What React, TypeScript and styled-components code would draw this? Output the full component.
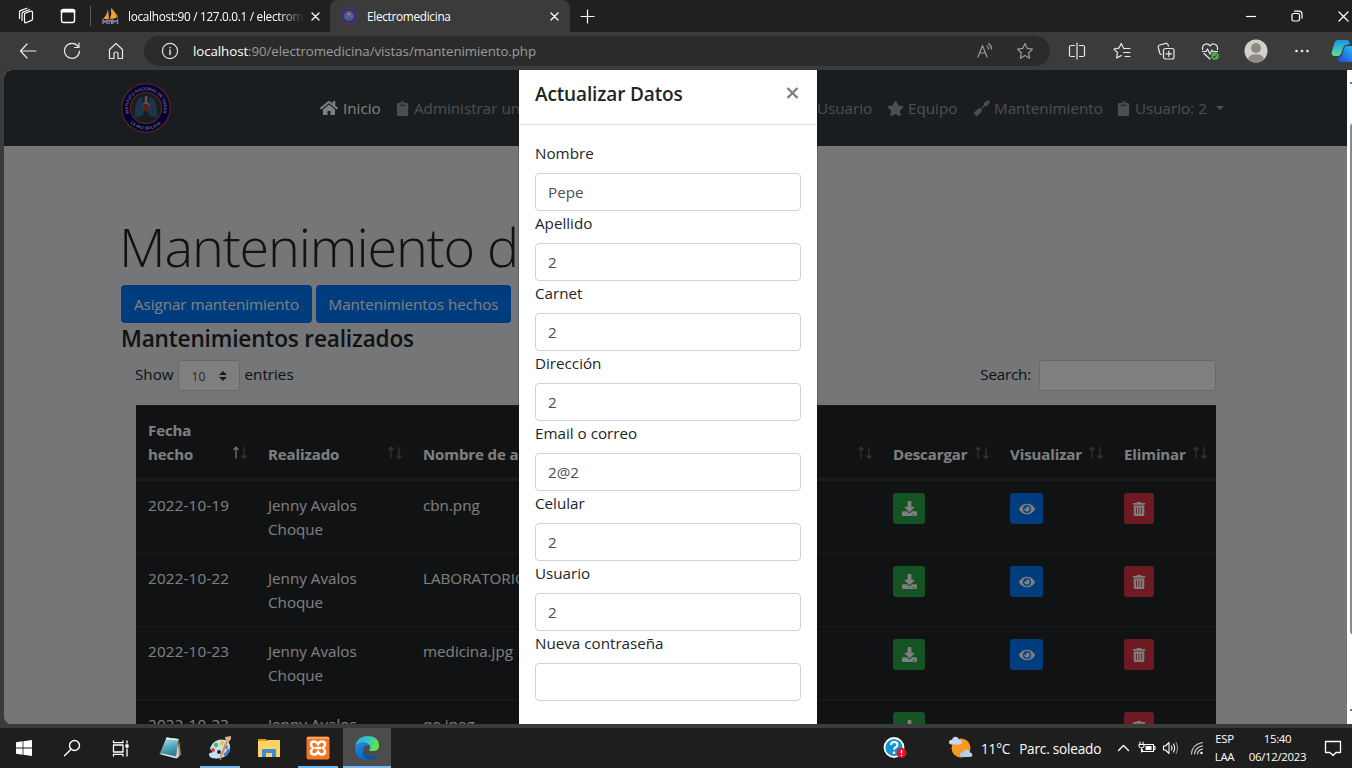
import React from 'react';
import styled, { createGlobalStyle, css } from 'styled-components';
import {
  FaHome,
  FaClipboard,
  FaStar,
  FaScrewdriver,
  FaDownload,
  FaEye,
  FaTrashAlt,
} from 'react-icons/fa';

const UI = "'Open Sans', 'Noto Sans', sans-serif";

const Global = createGlobalStyle`
  * { box-sizing: border-box; }
  body { margin: 0; background: #3b3b3b; overflow: hidden; font-family: ${UI}; }
  svg { display: block; flex: none; }
`;

const Screen = styled.div`
  width: 1352px;
  height: 768px;
  overflow: hidden;
  display: flex;
  flex-direction: column;
  background: #3b3b3b;
`;

const Slot = styled.div<{ $w: number }>`
  width: ${(p) => p.$w}px;
  height: 100%;
  flex: none;
  display: flex;
  align-items: center;
  justify-content: center;
`;

/* ---------- browser chrome ---------- */

const TabStrip = styled.div`
  height: 32px;
  flex: none;
  display: flex;
  background: #202020;
  color: #fff;
`;

const Divider = styled.div`
  width: 1px;
  height: 20px;
  margin: 0 0 0 5px;
  background: #5c5c5c;
`;

const Tab = styled.div<{ $active?: boolean }>`
  width: ${(p) => (p.$active ? 240 : 238)}px;
  height: 32px;
  flex: none;
  display: flex;
  align-items: center;
  padding-left: ${(p) => (p.$active ? 11 : 10)}px;
  border-radius: 8px 8px 0 0;
  background: ${(p) => (p.$active ? '#3b3b3b' : 'transparent')};
`;

const TabTitle = styled.div<{ $fade?: boolean }>`
  width: 176px;
  margin-left: ${(p) => (p.$fade ? 9 : 10)}px;
  flex: none;
  overflow: hidden;
  white-space: nowrap;
  font-size: 11.8px;
  line-height: 18px;
  letter-spacing: -0.3px;
  color: #fff;
  ${(p) =>
    p.$fade &&
    css`
      mask-image: linear-gradient(90deg, #000 86%, transparent 100%);
    `}
`;

const Spacer = styled.div`
  flex: 1;
`;

const Toolbar = styled.div`
  height: 38px;
  flex: none;
  display: flex;
  align-items: center;
  padding-left: 6px;
  color: #e8e8e8;
  background: #3b3b3b;
`;

const AddressBar = styled.div`
  width: 906px;
  height: 30px;
  margin: 0 5px 0 6px;
  flex: none;
  display: flex;
  align-items: center;
  border-radius: 15px;
  background: #2b2b2b;
  color: #9b9b9b;
`;

const Url = styled.div`
  margin-left: -3px;
  flex: 1;
  white-space: nowrap;
  font-size: 13.3px;
  letter-spacing: -0.07px;
  b {
    font-weight: 400;
    color: #fff;
  }
`;

/* ---------- page ---------- */

const Viewport = styled.div`
  height: 654px;
  flex: none;
  margin: 0 0 4px 4px;
  display: flex;
  position: relative;
  overflow: hidden;
  border-radius: 8px 0 0 8px;
`;

const Page = styled.div`
  width: 1343px;
  height: 654px;
  overflow: hidden;
  flex: none;
  background: #e9ecef;
  color: #212529;
  font-size: 15.2px;
  line-height: 24px;
`;

const Scrollbar = styled.div`
  width: 5px;
  padding: 12px 0 0 3px;
  background: #fff;
  overflow: hidden;
`;

const ScrollArrow = styled.div`
  width: 2px;
  height: 2px;
  background: #777;
`;

const ScrollThumb = styled.div`
  width: 8px;
  height: 512px;
  margin: 39px 0 74px;
  border-radius: 4px;
  background: #8a8a8a;
`;

const Navbar = styled.nav`
  height: 76px;
  padding: 0 116px 0 117px;
  display: flex;
  align-items: center;
  background: #343a40;
`;

const NavItem = styled.a<{ $active?: boolean; $w: number; $gap?: number }>`
  width: ${(p) => p.$w}px;
  flex: none;
  display: flex;
  align-items: center;
  gap: ${(p) => p.$gap ?? 3}px;
  white-space: nowrap;
  color: ${(p) => (p.$active ? '#fff' : 'rgba(255,255,255,.5)')};
`;

const NavGap = styled.div<{ $w: number }>`
  width: ${(p) => p.$w}px;
  flex: none;
`;

const Caret = styled.span`
  margin-left: 5px;
  border: 4px solid transparent;
  border-top-color: currentColor;
  border-bottom: 0;
`;

const Container = styled.main`
  width: 1110px;
  margin-left: 117px;
  padding-top: 66px;
`;

const Title = styled.h1`
  margin: 0 0 0 -2px;
  height: 73px;
  font-size: 54px;
  font-weight: 300;
  line-height: 68px;
  letter-spacing: -1.15px;
  white-space: nowrap;
`;

const ButtonRow = styled.div`
  display: flex;
  gap: 4px;
`;

const PrimaryButton = styled.button<{ $w: number }>`
  width: ${(p) => p.$w}px;
  height: 38px;
  padding: 0;
  border: 0;
  border-radius: 4px;
  background: #007bff;
  color: #fff;
  font: 15.2px/38px ${UI};
  letter-spacing: -0.04px;
  white-space: nowrap;
`;

const Subtitle = styled.h4`
  margin: 0;
  height: 37px;
  font-size: 22.6px;
  font-weight: 600;
  line-height: 31px;
  letter-spacing: -0.16px;
  white-space: nowrap;
`;

const Controls = styled.div`
  height: 45px;
  padding: 0 15px 0 14px;
  display: flex;
  align-items: flex-start;
  line-height: 29px;
`;

const LengthSelect = styled.div`
  width: 62px;
  height: 31px;
  margin: 0 5px 0 4px;
  padding: 1px 12px 0 13px;
  display: flex;
  align-items: center;
  justify-content: space-between;
  border: 1px solid #ced4da;
  border-radius: 3px;
  background: #fff;
  color: #495057;
  font-size: 12px;
`;

const SearchLabel = styled.span`
  letter-spacing: -0.2px;
`;

const SearchInput = styled.input`
  width: 177px;
  height: 31px;
  margin-left: 8px;
  border: 1px solid #ced4da;
  border-radius: 3px;
  background: #fff;
`;

const DataTable = styled.table`
  width: 1080px;
  margin-left: 15px;
  table-layout: fixed;
  border-collapse: separate;
  border-spacing: 0;
  background: #212529;
  color: #fff;
`;

const Th = styled.th`
  height: 75px;
  padding: 12px 9px 12px 12px;
  border-top: 1px solid #32383e;
  border-bottom: 2px solid #32383e;
  vertical-align: bottom;
  text-align: left;
  font-weight: 700;
  font-size: 15px;
  letter-spacing: -0.1px;
`;

const ThInner = styled.div`
  display: flex;
  align-items: flex-end;
  justify-content: space-between;
  white-space: nowrap;
`;

const Td = styled.td`
  height: 73px;
  padding: 12px 0 12px 12px;
  border-top: 1px solid #32383e;
  vertical-align: top;
`;

const DateText = styled.span`
  letter-spacing: 0.2px;
`;

const IconButton = styled.button<{ $kind: 'green' | 'blue' | 'red' }>`
  width: ${(p) => ({ green: 32, blue: 33, red: 30 })[p.$kind]}px;
  height: 31px;
  padding: 0;
  display: flex;
  align-items: center;
  justify-content: center;
  border: 0;
  border-radius: 3px;
  background: ${(p) => ({ green: '#28a745', blue: '#007bff', red: '#dc3545' })[p.$kind]};
  color: #fff;
`;

const Backdrop = styled.div`
  position: absolute;
  inset: 0 5px 0 0;
  background: rgba(0, 0, 0, 0.5);
`;

const Modal = styled.div`
  position: absolute;
  left: 515px;
  top: 0;
  width: 298px;
  height: 654px;
  background: #fff;
  color: #212529;
  box-shadow: 0 0 0 1px rgba(0, 0, 0, 0.2);
`;

const ModalHeader = styled.div`
  height: 55px;
  padding: 10px 18px 0 16px;
  display: flex;
  justify-content: space-between;
  border-bottom: 1px solid #dee2e6;
`;

const ModalTitle = styled.h5`
  margin: 0;
  font-size: 19px;
  font-weight: 600;
  line-height: 28px;
  letter-spacing: -0.13px;
`;

const ModalBody = styled.div`
  padding: 16px;
`;

const Field = styled.label`
  display: block;
  height: 70px;
  font-size: 15.2px;
  line-height: 24px;
`;

const FieldInput = styled.input`
  display: block;
  width: 100%;
  height: 38px;
  margin-top: 8px;
  padding: 0 12px 1px;
  border: 1px solid #ced4da;
  border-radius: 4px;
  outline: 0;
  background: #fff;
  color: #495057;
  font: 15.2px ${UI};
`;

/* ---------- taskbar ---------- */

const Taskbar = styled.div`
  height: 40px;
  flex: none;
  display: flex;
  background: #1e1e1e;
  color: #fff;
`;

const TaskApp = styled.div<{ $w: number; $line?: number; $active?: boolean }>`
  width: ${(p) => p.$w}px;
  height: 40px;
  flex: none;
  display: flex;
  align-items: center;
  justify-content: center;
  background: linear-gradient(#76b9ed, #76b9ed) bottom center / ${(p) => p.$line ?? 0}px 2px no-repeat
    ${(p) => (p.$active ? '#4c4c4c' : 'transparent')};
`;

const Weather = styled.div`
  display: flex;
  align-items: center;
  width: 131px;
  margin-left: 7px;
  gap: 9px;
  white-space: nowrap;
  font-size: 13.6px;
  letter-spacing: -0.2px;
`;

const TrayText = styled.div<{ $w: number }>`
  width: ${(p) => p.$w}px;
  padding-top: 2px;
  flex: none;
  text-align: center;
  white-space: nowrap;
  font-size: 11.4px;
  line-height: 18px;
  letter-spacing: -0.3px;
`;

/* ---------- icons ---------- */

type StrokeProps = { w?: number; h?: number; sw?: number; children: React.ReactNode };
const Line = ({ w = 18, h = 18, sw = 1.2, children }: StrokeProps) => (
  <svg
    width={w}
    height={h}
    viewBox={`0 0 ${w} ${h}`}
    fill="none"
    stroke="currentColor"
    strokeWidth={sw}
    strokeLinecap="round"
    strokeLinejoin="round"
  >
    {children}
  </svg>
);

const CloseX = ({ s = 9 }: { s?: number }) => (
  <Line w={s + 2} h={s + 2} sw={1.3}>
    <path d={`M1 1 L${s + 1} ${s + 1} M${s + 1} 1 L1 ${s + 1}`} />
  </Line>
);

const Seal = ({ size }: { size: number }) => (
  <svg width={size} height={size} viewBox="0 0 50 50">
    <defs>
      <path id={`top${size}`} d="M8 30.300 A17.800 17.800 0 1 1 42 30.300" />
      <path id={`bot${size}`} d="M8 38.200 A21.500 21.500 0 0 0 42 38.200" />
    </defs>
    <circle cx="25" cy="25" r="24.200" fill={size > 20 ? '#00006c' : '#2a2a8c'} stroke="#9a3b38" strokeWidth="1.600" />
    <circle cx="25" cy="25" r="15.600" fill={size > 20 ? '#343a40' : '#4a5a7c'} stroke="#a8463c" strokeWidth="1.400" />
    <path
      d="M21.500 14 C16 14 13.600 23 13.600 33.500 C18 35 22.500 33 23.400 28 Z M28.500 14 C34 14 36.400 23 36.400 33.500 C32 35 27.500 33 26.600 28 Z"
      fill="#3b6b98"
    />
    <path d="M23.800 13 h2.600 v6 l2.400 2.500 v4 h-7 v-4 l2-2.500z" fill="#b9a9b5" />
    <path d="M21.800 22 q3.500-3 6.800 1 q0.500 4-2.600 6 q-4-1.500-4.200-7z" fill="#a8422f" />
    {size > 20 && (
      <g fill="#c4c4dc" fontFamily="Liberation Sans, sans-serif" fontWeight="700" fontSize="4.300">
        <text>
          <textPath href={`#top${size}`} textLength="66">INSTITUTO NACIONAL DE TORAX</textPath>
        </text>
        <text>
          <textPath href={`#bot${size}`} startOffset="2" textLength="34">LA PAZ BOLIVIA</textPath>
        </text>
      </g>
    )}
  </svg>
);

const SailIcon = () => (
  <svg width="17" height="17" viewBox="0 0 17 17">
    <path d="M6 1 L7 11 L1 11 Q5 7 6 1z" fill="#f29b2e" />
    <path d="M9 0 Q14 4 14.500 10 L8 11 Q10 6 9 0z" fill="#f7a531" />
    <path d="M13 4 Q16 7 16 10 L15 10z" fill="#d9831c" />
    <path d="M1 16v-4l2 2 2-2v4M7 16v-3.500h2.500V16M11 16v-4l2 2 2.500-2v4" fill="none" stroke="#8b8aa8" strokeWidth="1.300" />
  </svg>
);

const SortArrows = ({ asc }: { asc?: boolean }) => (
  <svg width="15" height="24" viewBox="0 0 15 24" fill="none" stroke="#fff" strokeWidth="1.300">
    <path d="M4 16.500V5.500M1.500 8l2.500-2.800L6.500 8" opacity={asc ? 0.9 : 0.3} />
    <path d="M12 5v11M9.500 13.500l2.500 2.800L14.500 13.500" opacity="0.3" />
  </svg>
);

/* ---------- data ---------- */

const rows = [
  { date: '2022-10-19', who: 'Jenny Avalos', file: 'cbn.png', view: true },
  { date: '2022-10-22', who: 'Jenny Avalos', file: 'LABORATORIO', view: true },
  { date: '2022-10-23', who: 'Jenny Avalos', file: 'medicina.jpg', view: true },
  { date: '2022-10-23', who: 'Jenny Avalos', file: 'qe.jpeg', view: false },
];

const columns: { w: number; label: React.ReactNode }[] = [
  { w: 120, label: <>Fecha<br />hecho</> },
  { w: 155, label: 'Realizado' },
  { w: 220, label: 'Nombre de archivo' },
  { w: 250, label: '' },
  { w: 117, label: 'Descargar' },
  { w: 114, label: 'Visualizar' },
  { w: 104, label: 'Eliminar' },
];

const fields = [
  ['Nombre', 'Pepe'],
  ['Apellido', '2'],
  ['Carnet', '2'],
  ['Dirección', '2'],
  ['Email o correo', '2@2'],
  ['Celular', '2'],
  ['Usuario', '2'],
  ['Nueva contraseña', ''],
];

const BrowserTop = () => (
  <>
    <TabStrip>
      <Slot $w={52}>
        <Line w={18} h={18}>
          <path d="M7.500 6.500l6-2.200q2-.6 2 1.200v6.500q0 1-1 1.400l-5.500 2.300q-1.500.5-1.500-1zM5 13.500V6.500q0-1 1-1.400l6.500-2.400M2.500 11.500V5q0-1 1-1.400L10 1.200" />
        </Line>
      </Slot>
      <Slot $w={32}>
        <Line w={16} h={16} sw={1.4}>
          <rect x="1.500" y="1.500" width="13" height="13" rx="2" />
          <path d="M2 3h12" strokeWidth="3" />
        </Line>
      </Slot>
      <Slot $w={8}><Divider /></Slot>
      <Tab>
        <SailIcon />
        <TabTitle $fade>localhost:90 / 127.0.0.1 / electromedicina</TabTitle>
        <Slot $w={23}><CloseX s={7} /></Slot>
      </Tab>
      <Tab $active>
        <Seal size={16} />
        <TabTitle>Electromedicina</TabTitle>
        <Slot $w={22}><CloseX s={7} /></Slot>
      </Tab>
      <Slot $w={34}>
        <Line w={15} h={15}><path d="M7.500 1v13M1 7.500h13" /></Line>
      </Slot>
      <Spacer />
      <Slot $w={46}><Line w={12} h={12}><path d="M1 6.500h10" strokeLinecap="butt" /></Line></Slot>
      <Slot $w={46}>
        <Line w={12} h={12}>
          <rect x="1" y="3.500" width="7.500" height="7.500" rx="1.500" />
          <path d="M3.500 1.200h4.500q3 0 3 3v4" />
        </Line>
      </Slot>
      <NavGap $w={14} />
      <Slot $w={18}><CloseX s={9} /></Slot>
    </TabStrip>
    <Toolbar>
      <Slot $w={44}><Line><path d="M17 9H1.500M8 2L1.500 9l6.500 7" /></Line></Slot>
      <Slot $w={44}><Line><path d="M15 4.300A7.500 7.500 0 1 0 16.500 9M16 1v4.500h-4.500" /></Line></Slot>
      <Slot $w={44}>
        <Line><path d="M2.500 7.500L9 1.500l6.500 6V16.500h-4.500V12q0-2-2-2t-2 2v4.500H2.500z" /></Line>
      </Slot>
      <AddressBar>
        <Slot $w={52}>
          <Line w={18} h={18}>
            <g stroke="#e0e0e0"><circle cx="9" cy="9" r="7.600" /><path d="M9 8v4.500M9 5.500v.2" strokeWidth="1.500" /></g>
          </Line>
        </Slot>
        <Url><b>localhost</b>:90/electromedicina/vistas/mantenimiento.php</Url>
        <Slot $w={40}>
          <Line><path d="M2 15L6.500 3.500 11 15M3.500 11h6M11 4q1.500 1 1.500 3M12.500 1.500q3 2 3 5.500" /></Line>
        </Slot>
        <Slot $w={40}>
          <Line><path d="M9 1.500l2.300 4.900 5.200.7-3.800 3.700.9 5.400L9 13.600l-4.600 2.600.9-5.400L1.500 7.100l5.200-.7z" /></Line>
        </Slot>
        <Slot $w={5} />
      </AddressBar>
      <Slot $w={44}>
        <Line><path d="M9 1v16M6.500 3.500H3q-1.500 0-1.500 1.500v8q0 1.500 1.500 1.500h3.500M11.500 3.500H15q1.500 0 1.500 1.500v8q0 1.500-1.500 1.500h-3.500" /></Line>
      </Slot>
      <Slot $w={45}>
        <Line><path d="M10.800 6.500L8.200 1.500 5.900 6.200l-5 .8 3.600 3.600-.9 5.400 4.600-2.400M11 6.500h6M10.500 10.500h6.500M12 14.500h5" /></Line>
      </Slot>
      <Slot $w={44}>
        <Line>
          <rect x="6.500" y="6.500" width="10.500" height="10.500" rx="2" />
          <path d="M11.800 9v5.500M9 11.800h5.500M4.500 12.500q-1.500 0-2-2L1.200 5q-.3-1.500 1.300-2l6.500-1.600q1.500-.3 2 1.200l.4 1.500" />
        </Line>
      </Slot>
      <Slot $w={44}>
        <Line>
          <path d="M1.500 7.500Q1 3 4.800 2 7.500 1.500 9 4q1.500-2.500 4.200-2Q17 3 16.500 7.500M1.500 9.500H5l1.500-2.500 2.500 5 2-4 1 1.500h4.500M3 11.500L9 17" />
          <circle cx="14" cy="14" r="3.800" fill="#4caf50" stroke="none" />
          <path d="M12.500 14.500l1 1 2-2.500" stroke="#205a26" />
        </Line>
      </Slot>
      <Slot $w={48}>
        <svg width="24" height="24" viewBox="0 0 24 24">
          <circle cx="12" cy="12" r="11.500" fill="#d4d1cc" />
          <circle cx="12" cy="9" r="5" fill="#8d8984" />
          <path d="M4 20.200q1-5 8-5t8 5q-3.500 3.300-8 3.300t-8-3.300z" fill="#8d8984" />
        </svg>
      </Slot>
      <Slot $w={44}>
        <svg width="16" height="4" fill="#eee"><circle cx="2.500" cy="2" r="1.300" /><circle cx="8" cy="2" r="1.300" /><circle cx="13.500" cy="2" r="1.300" /></svg>
      </Slot>
      <NavGap $w={6} />
      <svg width="24" height="24" viewBox="0 0 24 24">
        <defs>
          <linearGradient id="cpA" x1="0" y1="0" x2="0" y2="1"><stop stopColor="#1597e8" /><stop offset="1" stopColor="#5fe09c" /></linearGradient>
          <linearGradient id="cpB" x1="0" y1="1" x2="1" y2="0"><stop stopColor="#1b44d8" /><stop offset="1" stopColor="#27c3f5" /></linearGradient>
        </defs>
        <path d="M8 1h9q2 0 3 4l-4 1q-2 0-3 3l-2 6q-1 2-3 2H5q-4.500 0-3-5L4.500 4q1-3 3.500-3z" fill="url(#cpA)" />
        <path d="M16 7h8v16H10q-2 0-3-4 4 0 5-3l2-6.500q.5-2.500 2-2.500z" fill="url(#cpB)" />
      </svg>
    </Toolbar>
  </>
);

const SiteNav = () => (
  <Navbar>
    <Seal size={50} />
    <NavGap $w={149} />
    <NavItem $active $w={75} $gap={5}><FaHome size={18} />Inicio</NavItem>
    <NavItem $w={200} $gap={4}><FaClipboard size={15} />Administrar unidad</NavItem>
    <NavGap $w={222} />
    <NavItem $w={70}>Usuario</NavItem>
    <NavItem $w={87} $gap={4}><FaStar size={17} />Equipo</NavItem>
    <NavItem $w={142} $gap={4}><FaScrewdriver size={16} />Mantenimiento</NavItem>
    <NavItem $w={112} $gap={4}><FaClipboard size={15} />Usuario: 2 <Caret /></NavItem>
  </Navbar>
);

const TableArea = () => (
  <DataTable>
    <colgroup>
      {columns.map((c, i) => <col key={i} width={c.w} />)}
    </colgroup>
    <thead>
      <tr>
        {columns.map((c, i) => (
          <Th key={i}><ThInner><span>{c.label}</span><SortArrows asc={i === 0} /></ThInner></Th>
        ))}
      </tr>
    </thead>
    <tbody>
      {rows.map((r, i) => (
        <tr key={i}>
          <Td><DateText>{r.date}</DateText></Td>
          <Td>{r.who}<br />Choque</Td>
          <Td>{r.file}</Td>
          <Td />
          <Td><IconButton $kind="green"><FaDownload size={15} /></IconButton></Td>
          <Td>{r.view && <IconButton $kind="blue"><FaEye size={16} /></IconButton>}</Td>
          <Td><IconButton $kind="red"><FaTrashAlt size={14} /></IconButton></Td>
        </tr>
      ))}
    </tbody>
  </DataTable>
);

const WindowsTaskbar = () => (
  <Taskbar>
    <TaskApp $w={48}>
      <svg width="16" height="16" viewBox="0 0 16 16" fill="#fff"><path d="M0 2.200L6.600 1.300v6.300H0zM7.400 1.200L16 0v7.600H7.400zM0 8.400h6.600v6.300L0 13.800zM7.400 8.400H16V16l-8.600-1.200z" /></svg>
    </TaskApp>
    <TaskApp $w={48}><Line sw={1.4}><circle cx="11.500" cy="6.500" r="5" /><path d="M8 10.300L1.500 16.800" /></Line></TaskApp>
    <TaskApp $w={48}>
      <Line w={17} h={17} sw={1.3}>
        <rect x="1.500" y="5" width="9.500" height="7" />
        <path d="M1.500 1v1.700H11V1M1.500 16v-1.700H11V16M15 1v2M15 9v7" />
        <rect x="14" y="5" width="2" height="2" fill="currentColor" />
      </Line>
    </TaskApp>
    <TaskApp $w={51}>
      <svg width="24" height="24" viewBox="0 0 24 24">
        <defs><linearGradient id="np" x1="0" y1="0" x2="0.300" y2="1"><stop stopColor="#c9eef2" /><stop offset=".5" stopColor="#5fb3c4" /><stop offset="1" stopColor="#2c7f98" /></linearGradient></defs>
        <path d="M21 3l2 16-4 2z" fill="#a78c5f" />
        <path d="M7 16l13 5-1.500 1.500L1 18z" fill="#dfe6e8" />
        <path d="M8.500 1.500L20.500 3 18 20.500 2 17z" fill="url(#np)" />
        <path d="M8.500 1.500L20.500 3l-.2 1.500L8 3z" fill="#eee" />
        <path d="M18 20.500l2-14 .8 14.500-2 1z" fill="#d8d8d0" />
      </svg>
    </TaskApp>
    <TaskApp $w={50} $line={40}>
      <svg width="26" height="26" viewBox="0 0 26 26">
        <path d="M3 13Q6 5 14 4.500q9 0 9 7.500 0 10-12 11.500Q2 24 2 19.500q0-2 3-2 2-1-.500-2-1.500-1-1.500-2.500z" fill="#c4dff0" />
        <circle cx="6" cy="15" r="2" fill="#d94444" /><circle cx="9" cy="10" r="2.200" fill="#55b556" />
        <circle cx="15" cy="8" r="2.200" fill="#f0c53a" /><circle cx="19" cy="12" r="2" fill="#3d8fe0" />
        <circle cx="12" cy="17" r="2" fill="#1e2a33" /><path d="M17 20q4-2 5-6" stroke="#4b78c8" strokeWidth="3" fill="none" />
        <path d="M21 7L15 21l-1 4-1 0 .5-5L19 6z" fill="#e08a3c" /><path d="M18 2l6-1 0 3-3 4-2-1z" fill="#d8b38a" />
      </svg>
    </TaskApp>
    <TaskApp $w={48}>
      <svg width="22" height="20" viewBox="0 0 22 20">
        <path d="M0 1h8l2 2H0z" fill="#e29a16" /><path d="M0 3h9l1-1h12v17H0z" fill="#ffd35f" />
        <path d="M4 19v-7q0-1 1-1h12q1 0 1 1v7h-4v-4H8v4z" fill="#3a8fd4" />
      </svg>
    </TaskApp>
    <TaskApp $w={50} $line={40}>
      <svg width="24" height="24" viewBox="0 0 24 24">
        <rect x=".5" y=".5" width="23" height="23" rx="2" fill="#f37623" />
        <path d="M1 1h22v2H1z" fill="#f9a366" />
        <path
          d="M8 5.500q-3 0-3 3 0 2 2 3.500-2 1.500-2 3.500 0 3 3 3 2.500 0 4-2.500 1.500 2.500 4 2.500 3 0 3-3 0-2-2-3.500 2-1.500 2-3.500 0-3-3-3-2.500 0-4 2.500-1.500-2.500-4-2.500z"
          fill="none" stroke="#fff" strokeWidth="2.600"
        />
        <path d="M9 12h6" stroke="#fff" strokeWidth="2.500" />
      </svg>
    </TaskApp>
    <TaskApp $w={48} $line={48} $active>
      <svg width="24" height="24" viewBox="0 0 24 24">
        <defs>
          <linearGradient id="eg" x1="0" y1="0" x2="1" y2=".3"><stop stopColor="#2aa8e8" /><stop offset=".6" stopColor="#35c9c0" /><stop offset="1" stopColor="#69e04b" /></linearGradient>
          <linearGradient id="eb" x1="0" y1="0" x2=".4" y2="1"><stop stopColor="#1c8fe0" /><stop offset="1" stopColor="#0f62b8" /></linearGradient>
        </defs>
        <path d="M.3 10.500Q2 0 12 0q11.500 0 12 9.500 0 5.500-6 5.500-4.500 0-3.700-1.500 1.700-1.500.7-3.500Q13.500 7 9 6.500 3.500 6.500.3 10.500z" fill="url(#eg)" />
        <path d="M.2 11Q3 6 9 6.500q4.500.5 5.500 3Q9 8 8 13q.5 7 8 7 3 0 6-2-3.500 6-10 6Q1 24 0 13z" fill="url(#eb)" />
        <path d="M8.200 12.500q-.7 7 7.800 7.500 3 0 6.300-2-3.300 5.500-8.800 5.700Q6 20 8.200 12.500z" fill="#134f9c" />
      </svg>
    </TaskApp>
    <Spacer />
    <Slot $w={48}>
      <svg width="24" height="24" viewBox="0 0 24 24">
        <circle cx="11" cy="11.500" r="9.500" fill="#1593d2" stroke="#fff" strokeWidth="1.800" />
        <path d="M8 9q0-3 3.200-3t3.200 2.700q0 1.800-1.800 2.500-1.500.8-1.500 2.500" stroke="#fff" strokeWidth="2" fill="none" />
        <circle cx="11" cy="16.800" r="1.300" fill="#fff" />
        <circle cx="18.500" cy="17" r="5" fill="#e81123" /><path d="M18.500 14v3.500M18.500 18.800v1.200" stroke="#fff" strokeWidth="1.400" />
      </svg>
    </Slot>
    <NavGap $w={29} />
    <svg width="26" height="40" viewBox="0 0 26 40">
      <circle cx="13" cy="20" r="9.500" fill="#f59a23" />
      <path d="M3.500 16.500q-3-.5-2.500-3 .5-2 3-1.800Q5 8.500 8 8.800q2.500.3 3 3 3 .2 3 2.500 0 2-2.500 2.200z" fill="#c3d7f4" />
      <path d="M14 29q-2.500-.5-2-3 .5-2 3-1.800 1-3 4-2.700 2.500.3 3 3 2.500.2 2.500 2.500 0 2-2.500 2z" fill="#b4cdf2" />
    </svg>
    <Weather><span>11°C</span><span>Parc. soleado</span></Weather>
    <Slot $w={22}><Line w={13} h={8} sw={1.4}><path d="M1.500 6.500l5-5 5 5" /></Line></Slot>
    <Slot $w={25}>
      <Line w={18} h={14} sw={1.1}>
        <path d="M6 3.500h9.500v7H4.500V8.500M15.500 5.500h1.500v3h-1.500M2 1v2M5 1v2M1 3.500h5v1.500q0 1.500-2.500 2-2.500-.5-2.500-2zM3.500 7v4" />
        <path d="M7.500 5h6v4h-6z" fill="currentColor" stroke="none" />
      </Line>
    </Slot>
    <Slot $w={23}>
      <Line w={18} h={14} sw={1.1}><path d="M1.500 5v4h2L7 12.500v-11L3.500 5zM9.500 5q1 2 0 4M11.500 3q2.200 4 0 8" /><path d="M14 1.500q3 5.500 0 11" opacity=".5" /></Line>
    </Slot>
    <Slot $w={30}>
      <Line w={14} h={14} sw={1.2}>
        <path d="M1.500 13Q2 3.500 12.500 1.500M4.500 13Q5 6.500 12.500 4.800M7.500 13Q8 9 12.500 8.200" opacity=".75" />
        <circle cx="11.500" cy="12" r="1.200" fill="currentColor" stroke="none" />
      </Line>
    </Slot>
    <TrayText $w={25}>ESP<br />LAA</TrayText>
    <TrayText $w={81}>15:40<br />06/12/2023</TrayText>
    <Slot $w={29}><Line w={18} h={18} sw={1.3}><path d="M1.500 2.500h15v11h-4.500l-3 3-3-3H1.500z" /></Line></Slot>
    <NavGap $w={5} />
  </Taskbar>
);

export default function App() {
  return (
    <>
      <Global />
      <Screen>
        <BrowserTop />
        <Viewport>
          <Page>
            <SiteNav />
            <Container>
              <Title>Mantenimiento de equipos</Title>
              <ButtonRow>
                <PrimaryButton $w={191}>Asignar mantenimiento</PrimaryButton>
                <PrimaryButton $w={195}>Mantenimientos hechos</PrimaryButton>
              </ButtonRow>
              <Subtitle>Mantenimientos realizados</Subtitle>
              <Controls>
                <span>Show</span>
                <LengthSelect>
                  10
                  <svg width="8" height="10" viewBox="0 0 8 10" fill="#343a40"><path d="M0 4l4-4 4 4zM0 6h8l-4 4z" /></svg>
                </LengthSelect>
                <span>entries</span>
                <Spacer />
                <SearchLabel>Search:</SearchLabel>
                <SearchInput />
              </Controls>
              <TableArea />
            </Container>
          </Page>
          <Scrollbar>
            <ScrollArrow />
            <ScrollThumb />
            <ScrollArrow />
          </Scrollbar>
          <Backdrop />
          <Modal>
            <ModalHeader>
              <ModalTitle>Actualizar Datos</ModalTitle>
              <svg width="13" height="26" viewBox="0 0 13 26" stroke="#7f7f7f" strokeWidth="2.400"><path d="M1.500 8l10 10M11.500 8l-10 10" /></svg>
            </ModalHeader>
            <ModalBody>
              {fields.map(([label, value]) => (
                <Field key={label}>
                  {label}
                  <FieldInput defaultValue={value} />
                </Field>
              ))}
            </ModalBody>
          </Modal>
        </Viewport>
        <WindowsTaskbar />
      </Screen>
    </>
  );
}
